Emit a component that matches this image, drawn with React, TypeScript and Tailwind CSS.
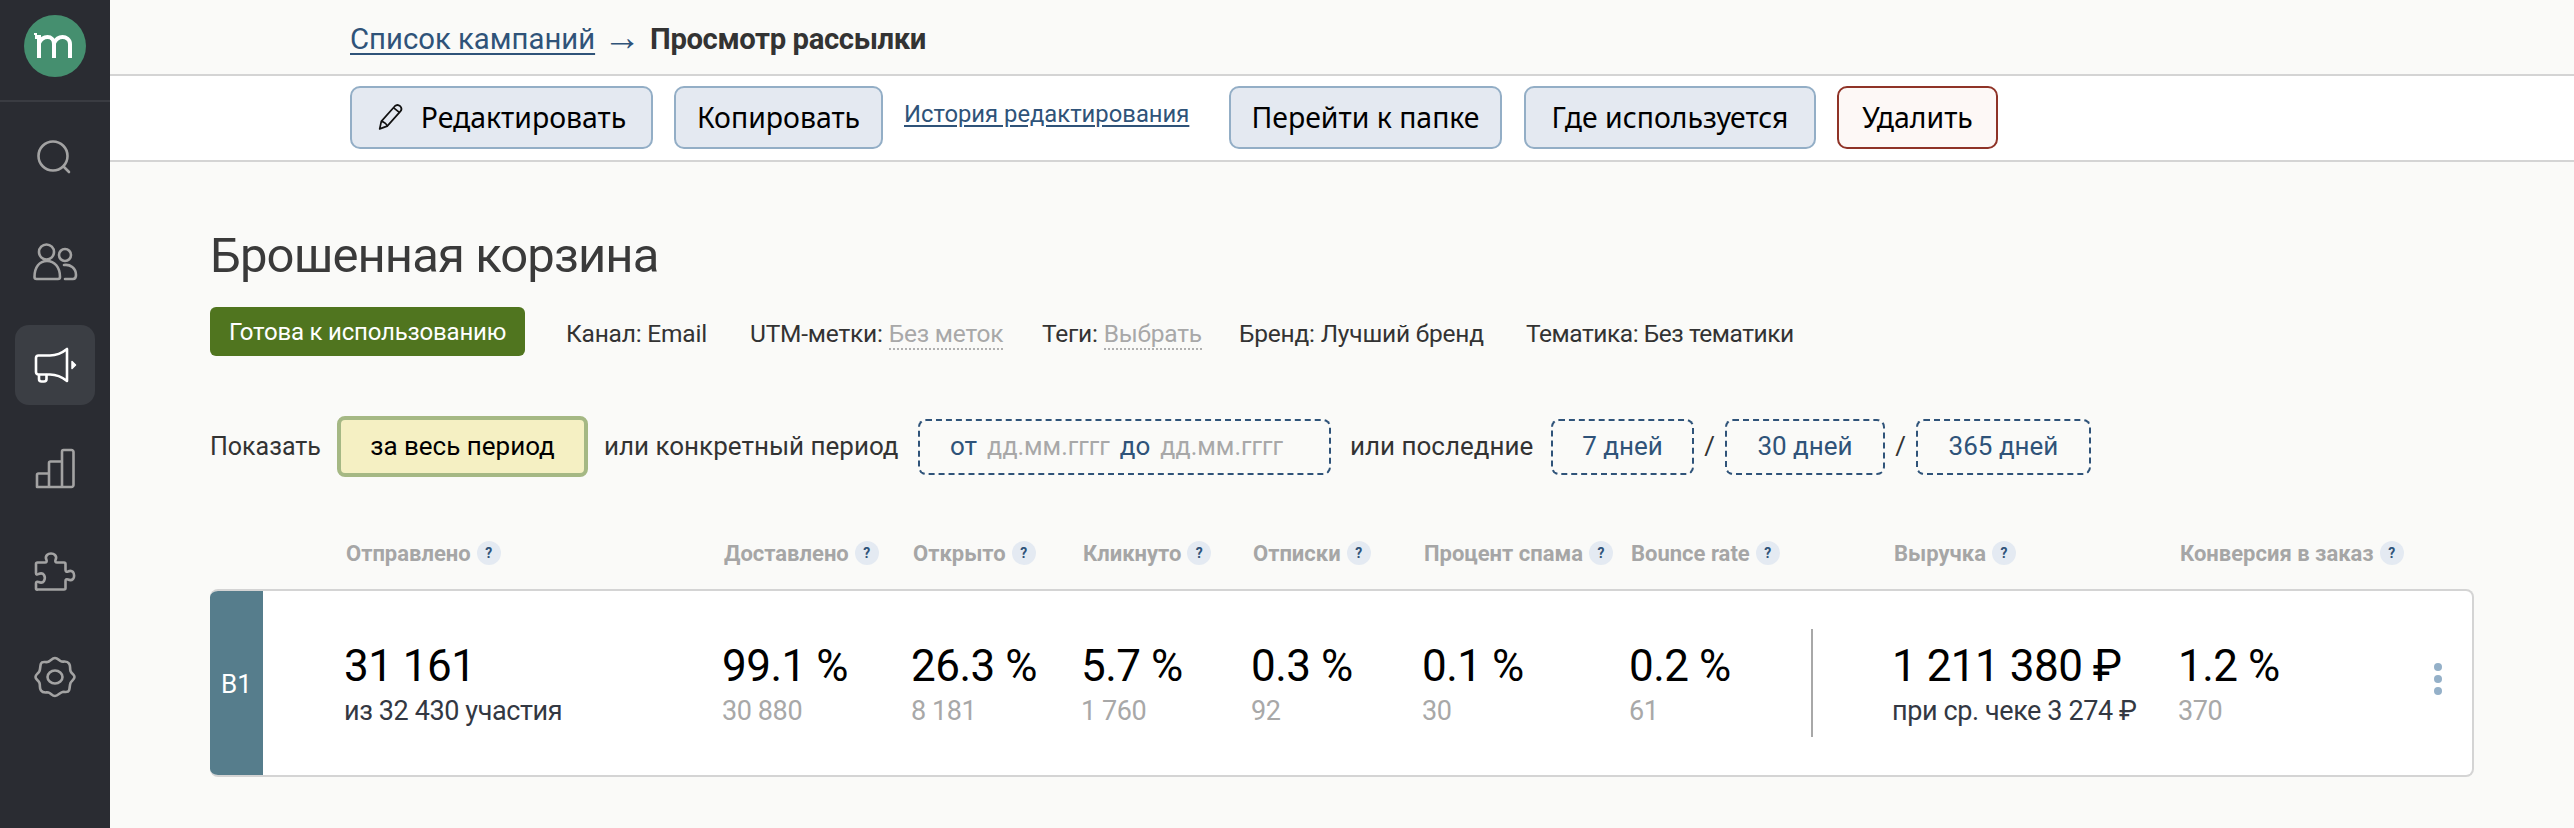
import React from "react";

const gridCols = "grid grid-cols-[378px_189px_170px_170px_171px_207px_180px_83px_286px_1fr]";

const Q = () => (
  <span className="ml-[6px] inline-flex h-[24px] w-[24px] shrink-0 items-center justify-center rounded-full bg-[#e4eaf2] text-[14px] font-bold leading-none text-[#2f5379]">?</span>
);

const Head = ({ t }: { t: string }) => (
  <div className="flex items-center whitespace-nowrap text-[22px] font-bold tracking-[0px] text-[#a6a6a6]">
    {t}
    <Q />
  </div>
);

const Cell = ({ v, s, dark }: { v: string; s: string; dark?: boolean }) => (
  <div className="-ml-[2px] flex flex-col whitespace-nowrap pt-[2px]">
    <div className="text-[44px] leading-[50px] tracking-[-0.5px] text-black">{v}</div>
    <div className={`mt-[4px] text-[27px] leading-[33px] tracking-[-0.4px] ${dark ? "text-[#333842]" : "text-[#a8a8a8]"}`}>{s}</div>
  </div>
);

const btn = "flex h-[63px] items-center justify-center rounded-[10px] border-2 border-[#93aec6] bg-[#e4e9f1] text-[28.400px] text-black [font-family:'Noto_Sans',sans-serif]";
const dash = "flex h-[56px] items-center justify-center rounded-[8px] border-2 border-dashed border-[#2f5379] text-[26px] text-[#2f5379]";

const NavIcon = ({ children, active }: { children: React.ReactNode; active?: boolean }) => (
  <div className={`flex h-[80px] w-[80px] items-center justify-center rounded-[14px] ${active ? "bg-[#3b3e44]" : ""}`}>
    <svg width="48" height="48" viewBox="0 0 48 48" fill="none" stroke={active ? "#ffffff" : "#a3a3a3"} strokeWidth="2.6" strokeLinecap="round" strokeLinejoin="round">
      {children}
    </svg>
  </div>
);

export default function App() {
  return (
    <div className="flex h-[828px] w-[2574px] overflow-hidden bg-[#fafaf8] text-[#333] [font-family:Roboto,sans-serif]">
      <aside className="flex w-[110px] shrink-0 flex-col items-center bg-[#2a2c32]">
        <div className="flex h-[102px] w-full items-center justify-center border-b-2 border-[#3a3c42] pb-[9px]">
          <svg width="62" height="62" viewBox="0 0 62 62">
            <circle cx="31" cy="31" r="31" fill="#458f6f" />
            <path d="M11 22h4v21M15 28c2-4 5-6 8.500-6s6.500 2.500 6.500 7v14M30 28c2-4 5-6 8.500-6s7.500 2.500 7.500 7v14" fill="none" stroke="#fff" strokeWidth="4" />
            <path d="M10 19h3" stroke="#fff" strokeWidth="2" />
          </svg>
        </div>
        <div className="mt-[15px] flex flex-col items-center gap-[24px]">
          <NavIcon>
            <circle cx="22" cy="23" r="14.5" />
            <path d="M33 34l5 5" />
          </NavIcon>
          <NavIcon>
            <circle cx="15.500" cy="15" r="7.500" />
            <path d="M3.500 40c0-10 5-16 12.500-16s13 6 13 16c0 1.500-.5 2-2 2H5.500c-1.500 0-2-.5-2-2z" />
            <circle cx="34" cy="18" r="6" />
            <path d="M33 28c6-1 12 3 12 10 0 3-1 4-3 4h-8" />
          </NavIcon>
          <NavIcon active>
            <path d="M5 17c0-1.500 1-2.500 2.500-2.500H19c6 0 12-2.500 17-6.500v32c-5-4-11-6.500-17-6.500H7.500C6 33.500 5 32.500 5 31z" />
            <path d="M8 34v4c0 1.500 1 2.500 2.500 2.500h2.500c1.500 0 2.500-1 2.500-2.500v-4" />
            <path d="M41 20.500l3.500 3.500-3.500 3.500z" fill="#fff" strokeWidth="1.500" />
          </NavIcon>
          <NavIcon>
            <path d="M6 42V30c0-1 .5-1.500 1.500-1.500H18M18 42V18c0-1 .5-1.500 1.500-1.500H31M31 42V7c0-1 .5-2 1.500-2h8c1 0 2 1 2 2v33c0 1-1 2-2 2H7.500C6.500 42 6 41.500 6 40.500" />
          </NavIcon>
          <NavIcon>
            <path d="M5 15c0-1 .5-1.500 1.500-1.500H14c1.500 0 2-1 1.500-2.500-1-2-1-3.500.5-5 2-2 6-2 8 0 1.500 1.500 1.500 3 .5 5-.5 1.500 0 2.500 1.500 2.500h7c1 0 1.500.5 1.500 1.500v6c0 1.500 1 2 2.500 1.500 2-1 3.500-1 5 .5 1.500 2 1.500 5.500 0 7-1.500 1.500-3 1.500-5 .5-1.500-.5-2.500 0-2.500 1.500v7c0 1-.5 1.500-1.500 1.500H6.500C5.500 41 5 40.500 5 39.500v-5c0-1.500 1-2 2.500-1.500 2.500 1 4.500.5 5.500-1 1-2 1-4.500 0-6-1-1.500-3-2-5.500-1C6 26 5 25.500 5 24z" />
          </NavIcon>
          <NavIcon>
            <path d="M24 5c3 0 4 3 6.500 3.500S36 7.500 38 10.500s.5 4.500 1.500 7.500 4 3.500 4 6-3 3.500-4 6-.5 5-1.500 7.500-4 1-6.500 1.500S27 43 24 43s-4-3-6.500-3.500S12 40.500 10 37.500s-.5-4.500-1.500-7.500-4-3.500-4-6 3-3.500 4-6 .5-5 1.500-7.500 4-1 6.500-1.500S21 5 24 5z" />
            <ellipse cx="24" cy="24" rx="7.500" ry="6.500" />
          </NavIcon>
        </div>
      </aside>

      <main className="flex min-w-0 flex-1 flex-col">
        <div className="flex h-[74px] items-center pl-[240px] pt-[5px] text-[29.300px] whitespace-nowrap">
          <a className="text-[#2f5379] underline decoration-[2px] underline-offset-[4px]">Список кампаний</a>
          <span className="ml-[8px] -mt-[5px] text-[38px] leading-none text-[#2f5379]">→</span>
          <b className="ml-[9px] tracking-[-0.4px] text-[#333]">Просмотр рассылки</b>
        </div>
        <div className="flex h-[88px] items-center border-y-2 border-[#d4d4d4] bg-white pl-[240px] pb-[2px]">
          <button className={`${btn} w-[303px] gap-[16px]`}>
            <svg width="28" height="28" viewBox="0 0 25 26" fill="none" stroke="#111" strokeWidth="1.600" strokeLinejoin="round">
              <path d="M2 24l1.500-7L16 3c1.500-1.500 3.500-1.500 5 0s1.500 3.500 0 5L9 21.500z" />
              <path d="M3.500 17c2 0 5.500 3 5.500 4.500M15 4.500l5.500 4.500" />
            </svg>
            Редактировать
          </button>
          <button className={`${btn} ml-[21px] w-[209px]`}>Копировать</button>
          <a className="mb-[5px] ml-[21px] w-[285px] whitespace-nowrap text-[23.800px] text-[#2f5379] underline underline-offset-[3px]">История редактирования</a>
          <button className={`${btn} ml-[40px] w-[273px]`}>Перейти к папке</button>
          <button className={`${btn} ml-[22px] w-[292px]`}>Где используется</button>
          <button className={`${btn} ml-[21px] w-[161px] !border-[#8f3327] !bg-[#fdf8f6]`}>Удалить</button>
        </div>

        <div className="flex flex-col pl-[100px]">
          <h1 className="mt-[66px] text-[49px] leading-[56px] font-normal tracking-[-0.9px] whitespace-nowrap text-[#3a3a3a]">Брошенная корзина</h1>
          <div className="mt-[23px] flex h-[49px] items-center whitespace-nowrap text-[24.500px] tracking-[-0.2px] text-[#333]">
            <div className="flex h-[49px] w-[315px] items-center justify-center rounded-[6px] bg-[#50751f] text-[24px] text-white">Готова к использованию</div>
            <span className="ml-[41px] w-[184px] pt-[6px]">Канал: Email</span>
            <span className="w-[292px] pt-[6px]">UTM-метки: <span className="border-b-2 border-dotted border-[#b0b0b0] text-[#a8a8a8]">Без меток</span></span>
            <span className="w-[197px] pt-[6px]">Теги: <span className="border-b-2 border-dotted border-[#b0b0b0] text-[#a8a8a8]">Выбрать</span></span>
            <span className="w-[287px] pt-[6px]">Бренд: Лучший бренд</span>
            <span className="pt-[6px] tracking-[-0.45px]">Тематика: Без тематики</span>
          </div>

          <div className="mt-[60px] flex h-[61px] items-center whitespace-nowrap text-[26px] text-[#333]">
            <span className="w-[127px] text-[25px]">Показать</span>
            <div className="flex h-[61px] w-[251px] items-center justify-center rounded-[8px] border-4 border-[#a5b884] bg-[#f5f0c3] text-black">за весь период</div>
            <span className="ml-[16px] w-[314px]">или конкретный период</span>
            <div className={`${dash} w-[413px] !justify-start pl-[30px]`}>
              от <span className="mx-[10px] text-[25px] text-[#a8a8a8]">дд.мм.гггг</span> до <span className="ml-[10px] text-[25px] text-[#a8a8a8]">дд.мм.гггг</span>
            </div>
            <span className="ml-[19px] w-[201px]">или последние</span>
            <div className={`${dash} w-[143px]`}>7 дней</div>
            <span className="w-[31px] text-center">/</span>
            <div className={`${dash} w-[160px]`}>30 дней</div>
            <span className="w-[31px] text-center">/</span>
            <div className={`${dash} w-[175px]`}>365 дней</div>
          </div>

          <div className={`${gridCols} mt-[59px] h-[34px] items-center pl-[136px]`}>
            <Head t="Отправлено" />
            <Head t="Доставлено" />
            <Head t="Открыто" />
            <Head t="Кликнуто" />
            <Head t="Отписки" />
            <Head t="Процент спама" />
            <Head t="Bounce rate" />
            <div />
            <Head t="Выручка" />
            <Head t="Конверсия в заказ" />
          </div>

          <div className="mt-[19px] flex h-[188px] w-[2264px] overflow-hidden rounded-[8px] border-2 border-l-0 border-[#d4d4d4] bg-white">
            <div className="-my-[2px] flex w-[53px] shrink-0 items-center justify-center bg-[#567d8c] pt-[3px] text-[26px] text-white">B1</div>
            <div className={`${gridCols} relative flex-1 items-center pl-[83px]`}>
              <Cell v="31 161" s="из 32 430 участия" dark />
              <Cell v="99.1 %" s="30 880" />
              <Cell v="26.3 %" s="8 181" />
              <Cell v="5.7 %" s="1 760" />
              <Cell v="0.3 %" s="92" />
              <Cell v="0.1 %" s="30" />
              <Cell v="0.2 %" s="61" />
              <div className="h-[108px] w-[2px] bg-[#a8a8a8]" />
              <Cell v="1 211 380 ₽" s="при ср. чеке 3 274 ₽" dark />
              <Cell v="1.2 %" s="370" />
              <div className="absolute top-[72px] right-[30px] flex flex-col gap-[4px]">
                <span className="h-[8px] w-[8px] rounded-full bg-[#94b0c8]" />
                <span className="h-[8px] w-[8px] rounded-full bg-[#94b0c8]" />
                <span className="h-[8px] w-[8px] rounded-full bg-[#94b0c8]" />
              </div>
            </div>
          </div>
        </div>
      </main>
    </div>
  );
}
